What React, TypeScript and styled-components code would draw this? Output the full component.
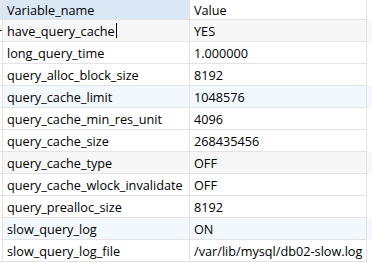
import React from 'react';
import styled, { createGlobalStyle } from 'styled-components';

const GlobalStyle = createGlobalStyle`
    html, body {
        margin: 0;
        padding: 0;
        background: #ffffff;
    }
    body {
        font-family: "Open Sans", "Noto Sans CJK SC", sans-serif;
        font-size: 12.7px;
        color: #000000;
    }
`

type RowTone = 'plain' | 'gray' | 'blue';

const toneColor: Record<RowTone, string> = {
    plain: '#ffffff',
    gray: '#f7f7f7',
    blue: '#f2f8fd',
}

const Grid = styled.div`
    width: 372px;
    height: 263px;
    overflow: hidden;
    background: #ffffff;
`

const HeaderRow = styled.div`
    display: grid;
    grid-template-columns: 3px 187px 177px;
    height: 20px;
`

const HeaderCell = styled.div<{ $active?: boolean }>`
    background: ${props => props.$active ? '#dae8f6' : '#ffffff'};
    border-right: 1px solid #e3e3e3;
    border-bottom: 1px solid #e3e3e3;
    display: flex;
    align-items: center;
    padding-left: 4px;
    white-space: nowrap;
`

const Corner = styled.div`
    background: #dae8f6;
    border-right: 1px solid #e3e3e3;
    border-bottom: 1px solid #e3e3e3;
`

const DataRow = styled.div<{ $tone: RowTone }>`
    display: grid;
    grid-template-columns: 3px 187px 177px;
    height: 22px;
    background: ${props => toneColor[props.$tone]};
`

const Marker = styled.div<{ $current?: boolean }>`
    border-right: 1px solid #e3e3e3;
    border-bottom: 1px solid #e3e3e3;
    background: #ffffff;
    display: flex;
    align-items: center;
    &::before {
        content: '';
        display: ${props => props.$current ? 'block' : 'none'};
        width: 2px;
        height: 1px;
        background: #333333;
    }
`

const Cell = styled.div`
    border-right: 1px solid #e3e3e3;
    border-bottom: 1px solid #e3e3e3;
    display: flex;
    align-items: center;
    padding-left: 4px;
    white-space: nowrap;
    overflow: hidden;
`

const Caret = styled.span`
    display: inline-block;
    width: 1px;
    height: 15px;
    margin-left: 1px;
    background: #000000;
`

interface IVariable {
    name: string;
    value: string;
    tone: RowTone;
}

const variables: IVariable[] = [
    { name: 'have_query_cache', value: 'YES', tone: 'gray' },
    { name: 'long_query_time', value: '1.000000', tone: 'plain' },
    { name: 'query_alloc_block_size', value: '8192', tone: 'plain' },
    { name: 'query_cache_limit', value: '1048576', tone: 'blue' },
    { name: 'query_cache_min_res_unit', value: '4096', tone: 'plain' },
    { name: 'query_cache_size', value: '268435456', tone: 'plain' },
    { name: 'query_cache_type', value: 'OFF', tone: 'gray' },
    { name: 'query_cache_wlock_invalidate', value: 'OFF', tone: 'plain' },
    { name: 'query_prealloc_size', value: '8192', tone: 'plain' },
    { name: 'slow_query_log', value: 'ON', tone: 'blue' },
    { name: 'slow_query_log_file', value: '/var/lib/mysql/db02-slow.log', tone: 'plain' },
]

const App: React.FC = () => {
    return (
        <>
            <GlobalStyle />
            <Grid>
                <HeaderRow>
                    <Corner />
                    <HeaderCell $active>Variable_name</HeaderCell>
                    <HeaderCell>Value</HeaderCell>
                </HeaderRow>
                {variables.map((v, i) => (
                    <DataRow key={v.name} $tone={v.tone}>
                        <Marker $current={i === 0} />
                        <Cell>
                            {v.name}
                            {i === 0 && <Caret />}
                        </Cell>
                        <Cell>{v.value}</Cell>
                    </DataRow>
                ))}
            </Grid>
        </>
    )
}

export default App
